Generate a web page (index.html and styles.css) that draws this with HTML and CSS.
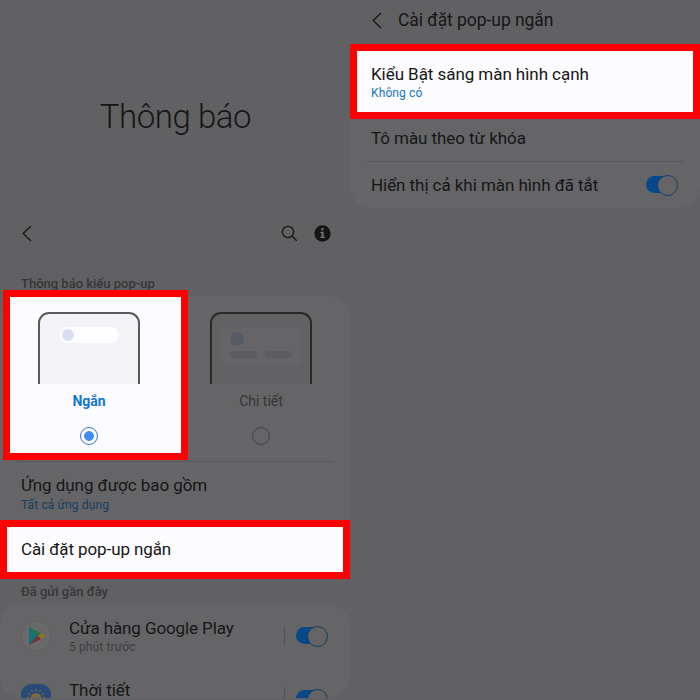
FILE: index.html
```html
<!DOCTYPE html>
<html lang="vi">
<head>
<meta charset="utf-8">
<title>Thông báo</title>
<link rel="stylesheet" href="styles.css">
</head>
<body>
<main class="screens">
  <section class="screen">
    <header class="hero"><h1>Thông báo</h1></header>
    <nav class="toolbar">
      <svg class="back" width="10" height="17" viewBox="0 0 10 17"><path d="M9 1 1.2 8.5 9 16"/></svg>
      <svg class="search" width="17" height="17" viewBox="0 0 17 17"><circle cx="7" cy="7" r="5.6"/><path d="m11 11 4.7 4.7"/></svg>
      <svg class="info" width="17" height="17" viewBox="0 0 17 17"><circle cx="8.5" cy="8.5" r="8.2"/><path d="M7.3 3.1h2.3v2.2H7.3zM6.3 6.7h3.4v5h1.1v1.4H6.3v-1.4h1.2V8.1H6.3z"/></svg>
    </nav>
    <h2 class="label style-label">Thông báo kiểu pop-up</h2>
    <div class="card popup-card">
      <div class="options">
        <div class="option focus">
          <div class="phone">
            <div class="pill"><i class="avatar"></i></div>
          </div>
          <span class="name">Ngắn</span>
          <i class="radio on"></i>
        </div>
        <div class="option dim">
          <div class="phone">
            <div class="notice"><i class="avatar"></i><div class="bars"><i></i><i></i></div></div>
          </div>
          <span class="name">Chi tiết</span>
          <i class="radio"></i>
        </div>
      </div>
      <div class="row apps"><span class="title included">Ứng dụng được bao gồm</span><span class="sub blue all">Tất cả ứng dụng</span></div>
      <div class="row focus brief"><span class="title brief-text">Cài đặt pop-up ngắn</span></div>
    </div>
    <h2 class="label recent-label">Đã gửi gần đây</h2>
    <div class="card recent">
      <div class="app">
        <svg class="icon" width="30" height="30" viewBox="0 0 30 30">
          <rect x=".5" y=".5" width="29" height="29" rx="11" fill="#69696b" stroke="#5c5b5d" stroke-width=".7"/>
          <path d="M8 6v18l9-9z" fill="#176e75"/><path d="m8 6 12 6.2-3.2 3.1z" fill="#27704b"/><path d="m20 12 4.8 3-4.8 3-3.2-2.9z" fill="#8b7420"/><path d="m8 24 8.8-8.9L20 18z" fill="#792b37"/>
        </svg>
        <div class="text"><span class="title play">Cửa hàng Google Play</span><span class="sub time">5 phút trước</span></div>
        <i class="divider"></i><i class="switch"></i>
      </div>
      <div class="app weather">
        <svg class="icon" width="30" height="30" viewBox="0 0 30 30">
          <rect width="30" height="30" rx="11" fill="#284a79"/>
          <path d="M15 5v2M10.5 6.2l1 1.8M19.5 6.2l-1 1.8M7.2 9.5 9 10.5M22.8 9.5 21 10.5M6 13.5h2M22 13.5h2" stroke="#7c6c38" stroke-width="1.2"/>
          <circle cx="15" cy="14.5" r="5.5" fill="#7c6c38"/>
          <circle cx="15.5" cy="16.5" r="4" fill="#68696c"/>
        </svg>
        <div class="text"><span class="title thoi">Thời tiết</span></div>
        <i class="divider"></i><i class="switch"></i>
      </div>
    </div>
  </section>
  <section class="screen">
    <header class="subheader">
      <svg class="back" width="10" height="17" viewBox="0 0 10 17"><path d="M9 1 1.2 8.5 9 16"/></svg>
      <h1>Cài đặt pop-up ngắn</h1>
    </header>
    <div class="card settings">
      <div class="row focus edge"><span class="title kieu">Kiểu Bật sáng màn hình cạnh</span><span class="sub blue none">Không có</span></div>
      <div class="row keyword"><span class="title to">Tô màu theo từ khóa</span></div>
      <div class="row off"><span class="title hien">Hiển thị cả khi màn hình đã tắt</span><i class="switch"></i></div>
    </div>
  </section>
</main>
</body>
</html>
```
FILE: styles.css
```css
* { box-sizing: border-box; }
body { margin: 0; background: #616163; color: #161617; font-family: Roboto, "Liberation Sans", sans-serif; }
i { display: block; font-style: normal; }
h1, h2 { margin: 0; font-weight: 400; }
svg { display: block; flex: none; }
.screens { display: grid; grid-template-columns: 350px 350px; height: 700px; overflow: hidden; }
.screen { height: 700px; overflow: hidden; }
.hero { height: 213px; padding-top: 97px; }
.hero h1 { font-size: 33px; letter-spacing: -.45px; line-height: 40px; font-weight: 300; text-align: center; padding-left: 1px; white-space: nowrap; }
.toolbar { display: flex; align-items: center; height: 41px; padding: 0 19px 0 22px; }
.back, .search { fill: none; stroke: #171718; stroke-width: 1.3; }
.search { margin-left: auto; margin-right: 16px; }
.info circle { fill: #151516; }
.info path { fill: #707072; }
.label { font-size: 13px; font-weight: 500; color: #363638; padding-left: 21px; white-space: nowrap; }
.style-label { height: 42px; padding-top: 21px; line-height: 18px; }
.recent-label { height: 29px; padding-top: 8px; line-height: 18px; }
.card { background: #656567; border-radius: 22px; }
.popup-card { height: 279px; }
.options { display: flex; height: 166px; margin: 0 17px; border-bottom: 1px solid #59595b; }
.option { display: flex; flex-direction: column; align-items: center; flex: none; height: 170px; }
.option.focus { width: 185px; margin: -6px 0 0 -14px; padding-top: 15px; }
.option.dim { width: 146px; height: 164px; padding-top: 16px; }
.focus { border: 7px solid #f00; background: #fcfbfd; }
.phone { width: 102px; height: 72px; border: 2px solid #5a595b; border-bottom: 0; border-radius: 11px 11px 0 0; background: #f3f2f4; }
.focus .phone { margin-left: -13px; }
.pill { width: 59px; height: 16px; margin: 13px auto 0 20px; padding: 2px; border-radius: 8px; background: #fdfcfe; }
.pill .avatar { width: 12px; height: 12px; border-radius: 50%; background: #d8def0; }
.dim .phone { border-color: #29292a; background: #626163; margin-left: 0; }
.notice { width: 80px; height: 38px; margin: 13px auto 0 9px; padding: 5px 9px; border-radius: 5px; background: #656567; }
.notice .avatar { width: 14px; height: 14px; border-radius: 50%; background: #565c67; }
.bars { display: flex; gap: 8px; margin-top: 5px; }
.bars i { width: 28px; height: 7px; border-radius: 4px; background: #5d5d5f; }
.name { font-size: 14px; line-height: 18px; margin-top: 8px; color: #353536; white-space: nowrap; }
.focus .name { font-weight: 700; color: #1376d6; margin-left: -13px; }
.radio { width: 18px; height: 18px; margin-top: 17px; border: 1px solid #444446; border-radius: 50%; }
.radio.on { border-color: #3478c6; background: radial-gradient(circle, #3e8ef7 0 4.5px, transparent 5.2px); margin-left: -13px; }
.row { display: flex; flex-direction: column; }
.title { font-size: 17px; letter-spacing: -.06px; line-height: 22px; white-space: nowrap; }
.brief-text, .play { letter-spacing: -.1px; }
.sub { font-size: 12px; letter-spacing: .12px; line-height: 16px; white-space: nowrap; }
.blue { color: #163d5f; }
.apps { height: 58px; padding: 12px 21px 0; }
.all { margin-top: 1px; }
.brief { height: 59px; padding: 11px 14px 0; }
.recent { height: 94px; overflow: hidden; }
.app { display: flex; align-items: center; height: 64px; padding: 0 22px 0 21px; }
.app .text { display: flex; flex-direction: column; margin-left: 18px; margin-top: -1px; }
.sub.time { color: #3e3e40; }
.divider { width: 1px; height: 18px; margin-left: auto; margin-right: 11px; background: #535355; }
.switch { position: relative; flex: none; width: 32px; height: 19px; margin-top: -1px; }
.switch::before { content: ""; position: absolute; left: 0; top: 1px; width: 28px; height: 17px; border-radius: 9px; background: #07488b; }
.switch::after { content: ""; position: absolute; right: 0; top: 0; width: 19px; height: 19px; border: 1px solid #143f69; border-radius: 50%; background: #656567; }
.weather { align-items: flex-start; padding-top: 16px; }
.weather .text { margin-top: -1px; }
.weather .title { line-height: 15px; }
.weather .divider { margin-top: 3px; }
.weather .switch { margin-top: 5px; }
.subheader { display: flex; align-items: center; height: 44px; padding: 0 22px 4px; }
.subheader h1 { font-size: 17.5px; letter-spacing: -.06px; line-height: 24px; margin-left: 16px; white-space: nowrap; }
.settings { height: 164px; }
.edge { height: 75px; padding: 12px 14px 0; }
.keyword { height: 43px; margin: 0 17px; padding: 8px 4px 0; border-bottom: 1px solid #59595b; }
.off { flex-direction: row; align-items: center; justify-content: space-between; height: 46px; padding: 0 22px 0 21px; }
.edge .blue { color: #2075bd; }
```
